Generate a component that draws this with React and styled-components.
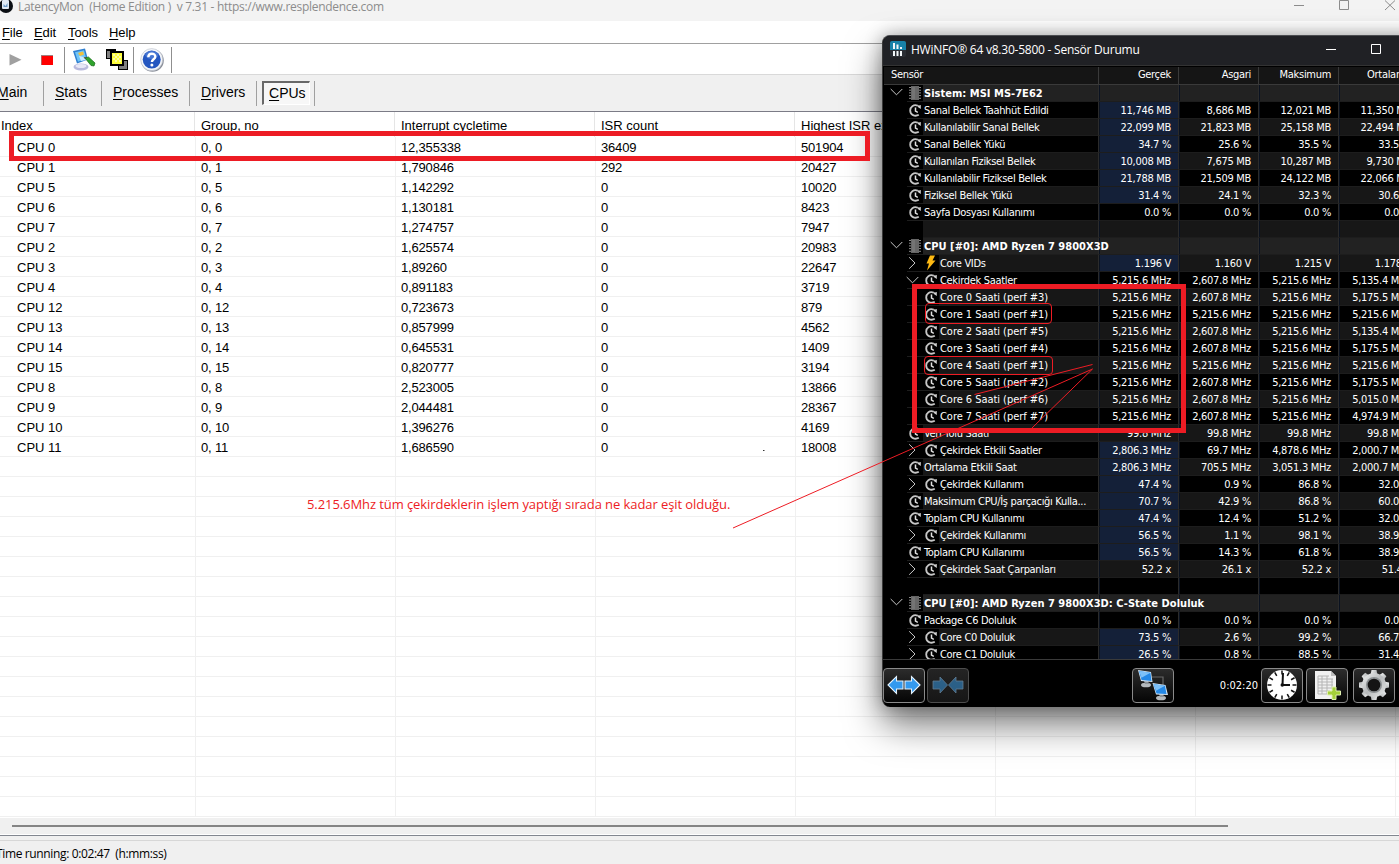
import React from 'react';
import styled, { createGlobalStyle } from 'styled-components';

const RED = '#ed1c24';

const cpus = [
    ['CPU 0', '0, 0', '12,355338', '36409', '501904'],
    ['CPU 1', '0, 1', '1,790846', '292', '20427'],
    ['CPU 5', '0, 5', '1,142292', '0', '10020'],
    ['CPU 6', '0, 6', '1,130181', '0', '8423'],
    ['CPU 7', '0, 7', '1,274757', '0', '7947'],
    ['CPU 2', '0, 2', '1,625574', '0', '20983'],
    ['CPU 3', '0, 3', '1,89260', '0', '22647'],
    ['CPU 4', '0, 4', '0,891183', '0', '3719'],
    ['CPU 12', '0, 12', '0,723673', '0', '879'],
    ['CPU 13', '0, 13', '0,857999', '0', '4562'],
    ['CPU 14', '0, 14', '0,645531', '0', '1409'],
    ['CPU 15', '0, 15', '0,820777', '0', '3194'],
    ['CPU 8', '0, 8', '2,523005', '0', '13866'],
    ['CPU 9', '0, 9', '2,044481', '0', '28367'],
    ['CPU 10', '0, 10', '1,396276', '0', '4169'],
    ['CPU 11', '0, 11', '1,686590', '0', '18008'],
];
const emptyRows = Array.from({ length: 18 }, () => []);

// kind: head | row | sub (expandable child) | leaf | blank
const sensors = [
    { kind: 'head', name: 'Sistem: MSI MS-7E62' },
    { kind: 'row', name: 'Sanal Bellek Taahhüt Edildi', hot: true, v: ['11,746 MB', '8,686 MB', '12,021 MB', '11,350 MB'] },
    { kind: 'row', name: 'Kullanılabilir Sanal Bellek', hot: true, v: ['22,099 MB', '21,823 MB', '25,158 MB', '22,494 MB'] },
    { kind: 'row', name: 'Sanal Bellek Yükü', hot: true, v: ['34.7 %', '25.6 %', '35.5 %', '33.5 %'] },
    { kind: 'row', name: 'Kullanılan Fiziksel Bellek', hot: true, v: ['10,008 MB', '7,675 MB', '10,287 MB', '9,730 MB'] },
    { kind: 'row', name: 'Kullanılabilir Fiziksel Bellek', hot: true, v: ['21,788 MB', '21,509 MB', '24,122 MB', '22,066 MB'] },
    { kind: 'row', name: 'Fiziksel Bellek Yükü', hot: true, v: ['31.4 %', '24.1 %', '32.3 %', '30.6 %'] },
    { kind: 'row', name: 'Sayfa Dosyası Kullanımı', v: ['0.0 %', '0.0 %', '0.0 %', '0.0 %'] },
    { kind: 'blank' },
    { kind: 'head', name: 'CPU [#0]: AMD Ryzen 7 9800X3D' },
    { kind: 'sub', icon: 'bolt', name: 'Core VIDs', hot: true, v: ['1.196 V', '1.160 V', '1.215 V', '1.178 V'] },
    { kind: 'sub', open: true, name: 'Çekirdek Saatler', v: ['5,215.6 MHz', '2,607.8 MHz', '5,215.6 MHz', '5,135.4 MHz'] },
    { kind: 'leaf', name: 'Core 0 Saati (perf #3)', v: ['5,215.6 MHz', '2,607.8 MHz', '5,215.6 MHz', '5,175.5 MHz'] },
    { kind: 'leaf', name: 'Core 1 Saati (perf #1)', v: ['5,215.6 MHz', '5,215.6 MHz', '5,215.6 MHz', '5,215.6 MHz'] },
    { kind: 'leaf', name: 'Core 2 Saati (perf #5)', v: ['5,215.6 MHz', '2,607.8 MHz', '5,215.6 MHz', '5,135.4 MHz'] },
    { kind: 'leaf', name: 'Core 3 Saati (perf #4)', v: ['5,215.6 MHz', '2,607.8 MHz', '5,215.6 MHz', '5,175.5 MHz'] },
    { kind: 'leaf', name: 'Core 4 Saati (perf #1)', v: ['5,215.6 MHz', '5,215.6 MHz', '5,215.6 MHz', '5,215.6 MHz'] },
    { kind: 'leaf', name: 'Core 5 Saati (perf #2)', v: ['5,215.6 MHz', '2,607.8 MHz', '5,215.6 MHz', '5,175.5 MHz'] },
    { kind: 'leaf', name: 'Core 6 Saati (perf #6)', v: ['5,215.6 MHz', '2,607.8 MHz', '5,215.6 MHz', '5,015.0 MHz'] },
    { kind: 'leaf', name: 'Core 7 Saati (perf #7)', v: ['5,215.6 MHz', '2,607.8 MHz', '5,215.6 MHz', '4,974.9 MHz'] },
    { kind: 'row', name: 'Veri Yolu Saati', v: ['99.8 MHz', '99.8 MHz', '99.8 MHz', '99.8 MHz'] },
    { kind: 'sub', name: 'Çekirdek Etkili Saatler', hot: true, v: ['2,806.3 MHz', '69.7 MHz', '4,878.6 MHz', '2,000.7 MHz'] },
    { kind: 'row', name: 'Ortalama Etkili Saat', hot: true, v: ['2,806.3 MHz', '705.5 MHz', '3,051.3 MHz', '2,000.7 MHz'] },
    { kind: 'sub', name: 'Çekirdek Kullanım', hot: true, v: ['47.4 %', '0.9 %', '86.8 %', '32.0 %'] },
    { kind: 'row', name: 'Maksimum CPU/İş parçacığı Kulla...', hot: true, v: ['70.7 %', '42.9 %', '86.8 %', '60.0 %'] },
    { kind: 'row', name: 'Toplam CPU Kullanımı', hot: true, v: ['47.4 %', '12.4 %', '51.2 %', '32.0 %'] },
    { kind: 'sub', name: 'Çekirdek Kullanımı', hot: true, v: ['56.5 %', '1.1 %', '98.1 %', '38.9 %'] },
    { kind: 'row', name: 'Toplam CPU Kullanımı', hot: true, v: ['56.5 %', '14.3 %', '61.8 %', '38.9 %'] },
    { kind: 'sub', name: 'Çekirdek Saat Çarpanları', v: ['52.2 x', '26.1 x', '52.2 x', '51.4 x'] },
    { kind: 'blank' },
    { kind: 'head', name: 'CPU [#0]: AMD Ryzen 7 9800X3D: C-State Doluluk' },
    { kind: 'row', name: 'Package C6 Doluluk', v: ['0.0 %', '0.0 %', '0.0 %', '0.0 %'] },
    { kind: 'sub', name: 'Core C0 Doluluk', hot: true, v: ['73.5 %', '2.6 %', '99.2 %', '66.7 %'] },
    { kind: 'sub', name: 'Core C1 Doluluk', hot: true, v: ['26.5 %', '0.8 %', '88.5 %', '31.4 %'] },
];

/* ---------- icons ---------- */

const AppIcon = () => (
    <svg width="14" height="14" viewBox="0 0 14 14">
        <circle cx="6" cy="6" r="7" fill="#0b0f14" />
        <rect x="2" y="0" width="7" height="9" rx="1" fill="#dfeaf5" />
        <path d="M3.500 7V4l2 2 2-3v4z" fill="#6e9cc8" />
    </svg>
);

const MonitorIcon = () => (
    <svg width="24" height="24" viewBox="0 0 24 24">
        <ellipse cx="9" cy="19" rx="7.500" ry="3.400" fill="#b9b9dc" />
        <ellipse cx="9" cy="18" rx="5.500" ry="2" fill="#e8e8f6" />
        <path d="M1 3l12-2.500 3 11-11 4z" fill="#2f7fd0" />
        <path d="M3 4.200l9-2 2.300 8.600-8.300 3z" fill="#6fc4f7" />
        <path d="M6 5l5-1.500 1 3-4 1.500z" fill="#f3c13a" />
        <path d="M7 8l5 1 2 3-5 1z" fill="#c9ecff" />
        <path d="M13 10l3.500-1 6.500 6-1 3-3-.5z" fill="#2fa32c" stroke="#176b18" strokeWidth=".7" />
        <path d="M11.500 9l3 .5-1.500 1.500z" fill="#5a4a2a" />
    </svg>
);

const LayersIcon = () => (
    <svg width="22" height="21" viewBox="0 0 22 21" shapeRendering="crispEdges">
        <path d="M0 0h10v10H0z" />
        <path d="M1 2h8v7H1z" fill="#808080" />
        <path d="M12 11h10v10H12z" />
        <path d="M13 12h8v8h-8z" fill="#808080" />
        <path d="M4 2h14v15H4z" />
        <path d="M6 4h10v11H6z" fill="#ffff3c" />
        <path d="M7 5h2v2H7zM11 5h2v2h-2zM9 7h2v2H9zM13 7h2v2h-2zM7 9h2v2H7zM11 9h2v2h-2zM9 11h2v2H9zM13 11h2v2h-2z" fill="#ffffa6" />
    </svg>
);

const HelpIcon = () => (
    <svg width="24" height="24" viewBox="0 0 24 24">
        <circle cx="12.500" cy="12.500" r="11.300" fill="#8a8f99" />
        <circle cx="11.700" cy="11.600" r="11" fill="#f4f6fa" stroke="#b9bec8" strokeWidth=".6" />
        <circle cx="11.700" cy="11.600" r="9" fill="#2456c0" />
        <ellipse cx="11.700" cy="7" rx="6.500" ry="4" fill="#5b8be0" opacity=".6" />
        <path d="M8.300 9.200c0-4.600 7-4.600 7-.5 0 2.600-3.400 2.600-3.400 5.200" fill="none" stroke="#fff" strokeWidth="2.400" />
        <circle cx="11.900" cy="17" r="1.500" fill="#fff" />
    </svg>
);

const HwLogo = () => (
    <svg width="16" height="16" viewBox="0 0 16 16">
        <rect width="16" height="16" rx="2" fill="#2a2d33" />
        <path d="M2 0h12a2 2 0 0 1 2 2v7H0V2a2 2 0 0 1 2-2z" fill="#1881a8" />
        <path d="M3 2h2v6H3zM6.500 3.500h2V8h-2zM10 6h2v2h-2zM3 10h2v5H3zM6.500 10h2v5h-2zM10 10h2v5h-2z" fill="#f2f6f8" />
    </svg>
);

const ClockArrow = () => (
    <svg width="13" height="13" viewBox="0 0 13 13">
        <path d="M8.500 1.600C4.500.2 1.200 3 1.200 6.500c0 4.200 4.600 6.600 8.600 4.300" fill="none" stroke="#c6c6c6" strokeWidth="1.800" />
        <path d="M8 .8l2 .6 1.800-.4v4L8.800 2.900z" fill="#d0d0d0" />
        <path d="M6.500 3.500v3.600l2.300 1.200" fill="none" stroke="#e2e2e2" strokeWidth="1.500" />
    </svg>
);

const ChipIcon = () => (
    <svg width="12" height="14" viewBox="0 0 12 14">
        <path d="M0 1.500h12M0 4.200h12M0 6.900h12M0 9.600h12M0 12.300h12" stroke="#8b8b8b" strokeWidth="1" />
        <rect x="2" y="0" width="8" height="14" fill="#666" />
        <rect x="3" y="1" width="3" height="12" fill="#747474" />
    </svg>
);

const BoltIcon = () => (
    <svg width="12" height="16" viewBox="0 0 12 16">
        <path d="M5 .5h5L7.500 5.500H10.500L2 15.500l2-7H1.500z" fill="#fdb913" />
    </svg>
);

const Chevron = ({ open }) => (
    <svg width="13" height="13" viewBox="0 0 13 13">
        <path d={open ? 'M.7 3l5.800 5.800L12.300 3' : 'M3.200.3L9 6l-5.800 5.700'} fill="none" stroke="#c8c8c8" strokeWidth="1" />
    </svg>
);

const ArrowsIcon = ({ inward }) => (
    <svg width="34" height="20" viewBox="0 0 34 20" opacity={inward ? 0.55 : 1}>
        {inward ? (
            <g fill="#3796de" stroke="#9cc9ee" strokeWidth=".8">
                <path d="M2 6h7V2l7.500 8L9 18v-4H2z" />
                <path d="M32 6h-7V2l-7.500 8 7.500 8v-4h7z" />
            </g>
        ) : (
            <g fill="#3399ee" stroke="#e4f1fb" strokeWidth="1.100">
                <path d="M1 10l8.500-8.500V6H16v8H9.500v4.500z" />
                <path d="M33 10l-8.500-8.500V6H18v8h6.500v4.500z" />
            </g>
        )}
    </svg>
);

const NetworkIcon = () => (
    <svg width="32" height="32" viewBox="0 0 32 32">
        <path d="M15 8h11v9" fill="none" stroke="#666" strokeWidth="1.200" />
        <ellipse cx="9" cy="16" rx="5" ry="2.300" fill="#b4b9bd" />
        <path d="M7 12l4-1 1 4H8z" fill="#8d9296" />
        <path d="M1 1l13 2 1.500 10L4 12z" fill="#d9e9f7" />
        <path d="M2 2l11.500 1.800L14.500 12l-10-1z" fill="#2488e6" />
        <path d="M2 2l11.500 1.800-9 5z" fill="#7cc0f8" />
        <ellipse cx="24" cy="29" rx="5" ry="2.300" fill="#b4b9bd" />
        <path d="M22 25l4-1 1 4h-4z" fill="#8d9296" />
        <path d="M15.500 14l13 2L31 26l-12-.5z" fill="#d9e9f7" />
        <path d="M16.500 15l11.500 1.700L29.500 25l-10-.5z" fill="#2488e6" />
        <path d="M16.500 15L28 16.700l-9 5z" fill="#7cc0f8" />
    </svg>
);

const ticks = [0, 30, 60, 90, 120, 150, 180, 210, 240, 270, 300, 330];

const ClockIcon = () => (
    <svg width="32" height="32" viewBox="0 0 32 32">
        <circle cx="16" cy="16" r="15" fill="#fff" />
        {ticks.map((a) => (
            <path key={a} d="M16 1.500v4" stroke="#111" strokeWidth="1.500" transform={`rotate(${a} 16 16)`} />
        ))}
        <path d="M17 4l-.5 12H24" fill="none" stroke="#111" strokeWidth="2" />
        <circle cx="16.300" cy="16" r="1.800" fill="#111" />
    </svg>
);

const SheetIcon = () => (
    <svg width="30" height="32" viewBox="0 0 30 32">
        <path d="M3 2h16l5 5v23H3z" fill="#f1f1f1" />
        <path d="M19 2v5h5z" fill="#bdbdbd" />
        <path d="M6 7h11M6 10h15M6 13h15M6 16h15M6 19h15M6 22h12M6 25h11M6 7v18M10 7v18M15 7v18M20 10v10" stroke="#b5b5b5" strokeWidth="1" fill="none" />
        <path d="M20 18h4v4h4.500v4H24v4.500h-4V26h-4.500v-4H20z" fill="#a5d03a" stroke="#dff0ae" strokeWidth="1" />
    </svg>
);

const GearIcon = () => (
    <svg width="32" height="32" viewBox="0 0 32 32">
        <defs>
            <linearGradient id="steel" x1="0" y1="0" x2="1" y2="1">
                <stop offset="0" stopColor="#f2f3f3" />
                <stop offset=".5" stopColor="#b7babb" />
                <stop offset="1" stopColor="#e9eaea" />
            </linearGradient>
        </defs>
        {[0, 45, 90, 135].map((a) => (
            <path key={a} d="M12.500 6l1-5h5l1 5v20l-1 5h-5l-1-5z" fill="url(#steel)" transform={`rotate(${a} 16 16)`} />
        ))}
        <circle cx="16" cy="16" r="12" fill="url(#steel)" />
        <circle cx="16" cy="16" r="8" fill="#8b8f91" />
        <circle cx="16" cy="16" r="6.300" fill="#141414" />
    </svg>
);

/* ---------- LatencyMon ---------- */

function LatencyMon() {
    return (
        <MonWindow>
            <MonTitle>
                <AppIcon />
                <MonCaption>LatencyMon&nbsp; (Home Edition )&nbsp; v 7.31 - https://www.resplendence.com</MonCaption>
                <CaptionButtons $color="#8c8c8c">
                    <svg width="109" height="14" viewBox="0 0 109 14">
                        <path d="M4 5.500h10M49.500.5h9v9h-9zM95 .5l10 9.500M105 .5L95 10" fill="none" stroke="currentColor" />
                    </svg>
                </CaptionButtons>
            </MonTitle>
            <MenuBar>
                <MenuItem $w={32}><u>F</u>ile</MenuItem>
                <MenuItem $w={34}><u>E</u>dit</MenuItem>
                <MenuItem $w={41}><u>T</u>ools</MenuItem>
                <MenuItem $w={40}><u>H</u>elp</MenuItem>
            </MenuBar>
            <ToolBar>
                <Tool $w={30}>
                    <svg width="13" height="12" viewBox="0 0 13 12"><path d="M.5 0L12.500 5.800.5 11.500z" fill="#a0a0a0" /></svg>
                </Tool>
                <Tool $w={33}>
                    <svg width="12" height="10" viewBox="0 0 12 10"><path d="M0 0h12v10H0z" fill="#a08080" /><path d="M.7 1H12v9H.7z" fill="#f00" /></svg>
                </Tool>
                <ToolSplit />
                <Tool $w={37}><MonitorIcon /></Tool>
                <Tool $w={30}><LayersIcon /></Tool>
                <ToolSplit />
                <Tool $w={36}><HelpIcon /></Tool>
                <ToolSplit />
            </ToolBar>
            <TabBar>
                <Tab $w={44}><TabText $x={-3}><u>M</u>ain</TabText></Tab>
                <Tab $w={58}><TabText $x={11}><u>S</u>tats</TabText></Tab>
                <Tab $w={88}><TabText $x={11}><u>P</u>rocesses</TabText></Tab>
                <Tab $w={67}><TabText $x={11}><u>D</u>rivers</TabText></Tab>
                <Tab $w={58}><Pressed><u>C</u>PUs</Pressed></Tab>
            </TabBar>
            <Grid>
                <GridHead>
                    <HeadCell $first>Index</HeadCell>
                    <HeadCell>Group, no</HeadCell>
                    <HeadCell>Interrupt cycletime</HeadCell>
                    <HeadCell>ISR count</HeadCell>
                    <HeadCell>Highest ISR execution</HeadCell>
                    <HeadCell />
                    <HeadCell />
                </GridHead>
                {cpus.concat(emptyRows).map((r, i) => (
                    <GridRow key={i}>
                        {[0, 1, 2, 3, 4, 5, 6].map((c) => <Cell key={c} $first={c === 0}>{r[c]}</Cell>)}
                    </GridRow>
                ))}
            </Grid>
            <ScrollTrack><ScrollThumb /></ScrollTrack>
            <StatusBar><StatusText>Time running: 0:02:47&nbsp; (h:mm:ss)</StatusText></StatusBar>
        </MonWindow>
    );
}

/* ---------- HWiNFO ---------- */

function SensorRow({ item, index }) {
    const { kind, name, v = [], hot, open, icon } = item;
    const shade = kind === 'head' ? '#222222' : index % 2 ? '#000000' : '#171717';
    const nested = kind === 'sub' || kind === 'leaf';
    return (
        <Row>
            <Gutter>{kind === 'head' && <Chevron open />}</Gutter>
            <IconCell $line={kind !== 'blank'}>
                {kind === 'head' && <ChipIcon />}
                {kind === 'row' && <ClockArrow />}
                {kind === 'sub' && <ChevronSlot><Chevron open={open} /></ChevronSlot>}
            </IconCell>
            {nested && <IconCell $line>{icon === 'bolt' ? <BoltIcon /> : <ClockArrow />}</IconCell>}
            <NameCell $bg={shade} $kind={kind} $nested={nested}>{name}</NameCell>
            {[0, 1, 2, 3].map((c) => (
                <ValueCell key={c} $bg={hot && c === 0 ? '#142038' : shade}>{v[c]}</ValueCell>
            ))}
        </Row>
    );
}

function HwInfo() {
    return (
        <HwWindow>
            <HwTitle>
                <HwLogo />
                <HwCaption>HWiNFO® 64 v8.30-5800 - Sensör Durumu</HwCaption>
                <CaptionButtons $color="#fff">
                    <svg width="73" height="14" viewBox="0 0 73 14">
                        <path d="M0 7.500h10M45.500 2.500h9v9h-9z" fill="none" stroke="currentColor" />
                    </svg>
                </CaptionButtons>
            </HwTitle>
            <HwHead>
                <HwHeadName>Sensör</HwHeadName>
                <HwHeadCell>Gerçek</HwHeadCell>
                <HwHeadCell>Asgari</HwHeadCell>
                <HwHeadCell>Maksimum</HwHeadCell>
                <HwHeadCell>Ortalama</HwHeadCell>
            </HwHead>
            <Tree>
                {sensors.map((s, i) => <SensorRow key={i} item={s} index={i} />)}
            </Tree>
            <HwFooter>
                <HwButton><ArrowsIcon /></HwButton>
                <HwButton $gap={2} $dim><ArrowsIcon inward /></HwButton>
                <HwButton $gap={163}><NetworkIcon /></HwButton>
                <Uptime>0:02:20</Uptime>
                <HwButton $gap={3}><ClockIcon /></HwButton>
                <HwButton $gap={3}><SheetIcon /></HwButton>
                <HwButton $gap={5}><GearIcon /></HwButton>
            </HwFooter>
        </HwWindow>
    );
}

/* ---------- red pen notes ---------- */

function Notes() {
    return (
        <>
            <NoteText>5.215.6Mhz tüm çekirdeklerin işlem yaptığı sırada ne kadar eşit olduğu.</NoteText>
            <Frame $x={9} $y={131} $w={861} $h={30} $t={5} />
            <Frame $x={912} $y={284} $w={274} $h={149} $t={5} />
            <Frame $x={925} $y={303} $w={127} $h={21} $t={1} $r={4} />
            <Frame $x={924} $y={356} $w={129} $h={19} $t={1} $r={4} />
            <Pen width="1399" height="864" viewBox="0 0 1399 864">
                <path d="M733 528L1092.500 369L1032 428M974.500 394.500L1092.500 364.500" />
                <path d="M763 450.500h1.500" stroke="#333" />
            </Pen>
        </>
    );
}

export default function App() {
    return (
        <Desktop>
            <GlobalStyle />
            <LatencyMon />
            <HwInfo />
            <Notes />
        </Desktop>
    );
}

const GlobalStyle = createGlobalStyle`
    * { box-sizing: border-box; }
    body { margin: 0; overflow: hidden; }
    svg { display: block; flex: none; }
    u { text-underline-offset: 2px; text-decoration-thickness: 1px; }
`;

const Desktop = styled.div`
    position: relative;
    width: 1399px;
    height: 864px;
    overflow: hidden;
    white-space: nowrap;
    font-family: 'Liberation Sans', Arial, sans-serif;
`;

const MonWindow = styled.div`
    display: flex;
    flex-direction: column;
    height: 100%;
    background: #fff;
    color: #000;
`;

const MonTitle = styled.div`
    display: flex;
    height: 21px;
    background: #f3f3f3;
`;

const MonCaption = styled.span`
    margin-left: 4px;
    font: 12px/13px 'Open Sans', sans-serif;
    letter-spacing: -0.29px;
    color: #8c8c8c;
`;

const CaptionButtons = styled.div`
    margin-left: auto;
    color: ${(p) => p.$color};
`;

const MenuBar = styled.div`
    display: flex;
    align-items: center;
    height: 23px;
    padding-left: 2px;
    border-bottom: 1px solid #a0a0a0;
    font-size: 13px;
    letter-spacing: -0.1px;
`;

const MenuItem = styled.span`
    width: ${(p) => p.$w}px;
`;

const ToolBar = styled.div`
    display: flex;
    align-items: center;
    height: 31px;
    padding-top: 1px;
    border-bottom: 1px solid #d9d9d9;
`;

const Tool = styled.div`
    display: flex;
    justify-content: center;
    width: ${(p) => p.$w}px;
`;

const ToolSplit = styled.div`
    width: 1px;
    height: 26px;
    margin-left: 1px;
    background: #8f8f8f;
`;

const TabBar = styled.div`
    display: flex;
    align-items: center;
    height: 37px;
    background: #f0f0f0;
    border-bottom: 1px solid #7b7b86;
    font-size: 14px;
`;

const Tab = styled.div`
    display: flex;
    align-items: center;
    width: ${(p) => p.$w}px;
    height: 25px;
    border-right: 1px solid #a0a0a0;
`;

const TabText = styled.span`
    margin: -2px 0 0 ${(p) => p.$x}px;
`;

const Pressed = styled.span`
    width: 48px;
    height: 24px;
    margin-left: 5px;
    padding-left: 5px;
    line-height: 20px;
    background: #f7f7f7;
    border: 1px solid #fff;
    border-top: 2px solid #696969;
    border-left: 2px solid #696969;
`;

const Grid = styled.div`
    height: 706px;
    font-size: 13px;
`;

const GridHead = styled.div`
    display: flex;
    height: 25px;
`;

const HeadCell = styled.div`
    flex: none;
    width: ${(p) => (p.$first ? 195 : 200)}px;
    padding: 6px 0 0 ${(p) => (p.$first ? 1 : 6)}px;
    line-height: 15px;
    border-right: 1px solid #e5e5e5;
    overflow: hidden;
`;

const GridRow = styled.div`
    display: flex;
    height: 20px;
    border-bottom: 1px solid #f0f0f0;
`;

const Cell = styled.div`
    flex: none;
    width: ${(p) => (p.$first ? 196 : 200)}px;
    padding-left: ${(p) => (p.$first ? 17 : 5)}px;
    line-height: 21px;
    letter-spacing: ${(p) => (p.$first ? 0 : -0.17)}px;
    border-right: 1px solid #f0f0f0;
`;

const ScrollTrack = styled.div`
    height: 16px;
    padding: 7px 171px 0 12px;
    background: #f0f0f0;
`;

const ScrollThumb = styled.div`
    height: 2px;
    background: #858585;
`;

const StatusBar = styled.div`
    flex: 1;
    margin-top: 1px;
    padding-top: 4px;
    background: #f0f0f0;
    border-top: 1px solid #828790;
`;

const StatusText = styled.div`
    height: 23px;
    border-top: 1px solid #d7d7d7;
    font: 12px/26px 'Open Sans', sans-serif;
    letter-spacing: -0.36px;
    text-indent: -4px;
`;

const HwWindow = styled.div`
    position: absolute;
    z-index: 1;
    left: 882px;
    top: 35px;
    width: 600px;
    height: 672px;
    display: flex;
    flex-direction: column;
    padding-left: 1px;
    background: #000;
    border-top: 1px solid #4a4c50;
    border-left: 1px solid #3a3a3a;
    border-radius: 8px;
    overflow: hidden;
    box-shadow: 0 18px 36px rgba(0, 0, 0, 0.52), 0 0 18px rgba(0, 0, 0, 0.3);
    color: #fff;
    font: 11px 'DejaVu Sans Condensed', 'DejaVu Sans', Tahoma, sans-serif;
    letter-spacing: -0.3px;
`;

const HwTitle = styled.div`
    display: flex;
    align-items: center;
    height: 30px;
    margin-left: -1px;
    padding: 0 83px 3px 7px;
    background: #202125;
    border-bottom: 1px solid #333;
`;

const HwCaption = styled.span`
    margin-left: 5px;
    font: 12px 'Open Sans', sans-serif;
    letter-spacing: -0.23px;
`;

const HwHead = styled.div`
    display: flex;
    flex: none;
    height: 19px;
    padding-top: 1px;
    border-bottom: 1px solid #3a3a3a;
    line-height: 16px;
`;

const HwHeadName = styled.div`
    width: 215px;
    padding-left: 7px;
    background: #151515;
    border-right: 1px solid #3a3a3a;
`;

const HwHeadCell = styled.div`
    width: 80px;
    padding-right: 7px;
    text-align: right;
    background: #151515;
    border-right: 1px solid #3a3a3a;
`;

const Tree = styled.div`
    height: 574px;
    flex: none;
    overflow: hidden;
`;

const Row = styled.div`
    display: flex;
    height: 17px;
    line-height: 18px;
`;

const Gutter = styled.div`
    width: 23px;
    padding: 1px 0 0 6px;
`;

const IconCell = styled.div`
    display: flex;
    align-items: center;
    width: 16px;
    padding-left: 2px;
    border-bottom: 1px solid ${(p) => (p.$line ? '#1d1d1d' : 'transparent')};
`;

const ChevronSlot = styled.span`
    margin-left: -3px;
`;

const spacing = { head: 0.03, leaf: -0.04 };

const NameCell = styled.div`
    position: relative;
    z-index: 1;
    flex: none;
    width: ${(p) => (p.$nested ? 160 : 176)}px;
    padding-left: 1px;
    background: ${(p) => p.$bg};
    border-bottom: 1px solid #1d1d1d;
    border-right: 1px solid #2b2b2b;
    font-weight: ${(p) => (p.$kind === 'head' ? 'bold' : 'normal')};
    letter-spacing: ${(p) => spacing[p.$kind] || -0.32}px;
`;

const ValueCell = styled.div`
    flex: none;
    width: 80px;
    padding-right: 7px;
    text-align: right;
    background: ${(p) => p.$bg};
    border-bottom: 1px solid #1d1d1d;
    border-right: 1px solid #2b2b2b;
    box-shadow: inset 1px 0 0 #0a1220;
`;

const HwFooter = styled.div`
    display: flex;
    align-items: center;
    flex: 1;
    padding-top: 3px;
    margin-left: -1px;
    border-top: 1px solid #3a3a3a;
`;

const HwButton = styled.div`
    display: flex;
    flex: none;
    align-items: center;
    justify-content: center;
    width: 42px;
    height: 35px;
    margin-left: ${(p) => p.$gap || 0}px;
    border: 1px solid ${(p) => (p.$dim ? '#4d4d4d' : '#8a8a8a')};
    border-radius: 4px;
    background: linear-gradient(${(p) => (p.$dim ? '#242424, #161616' : '#2c2c2c, #050505')});
`;

const Uptime = styled.span`
    width: 84px;
    text-align: right;
    letter-spacing: 0;
`;

const NoteText = styled.div`
    position: absolute;
    left: 307px;
    top: 494px;
    color: ${RED};
    font: 13px/20px 'Open Sans', Calibri, sans-serif;
    letter-spacing: -0.08px;
`;

const Frame = styled.div`
    position: absolute;
    z-index: 2;
    left: ${(p) => p.$x}px;
    top: ${(p) => p.$y}px;
    width: ${(p) => p.$w}px;
    height: ${(p) => p.$h}px;
    border: ${(p) => p.$t}px solid ${RED};
    border-radius: ${(p) => p.$r || 0}px;
`;

const Pen = styled.svg`
    position: absolute;
    z-index: 2;
    left: 0;
    top: 0;
    fill: none;
    stroke: ${RED};
`;
